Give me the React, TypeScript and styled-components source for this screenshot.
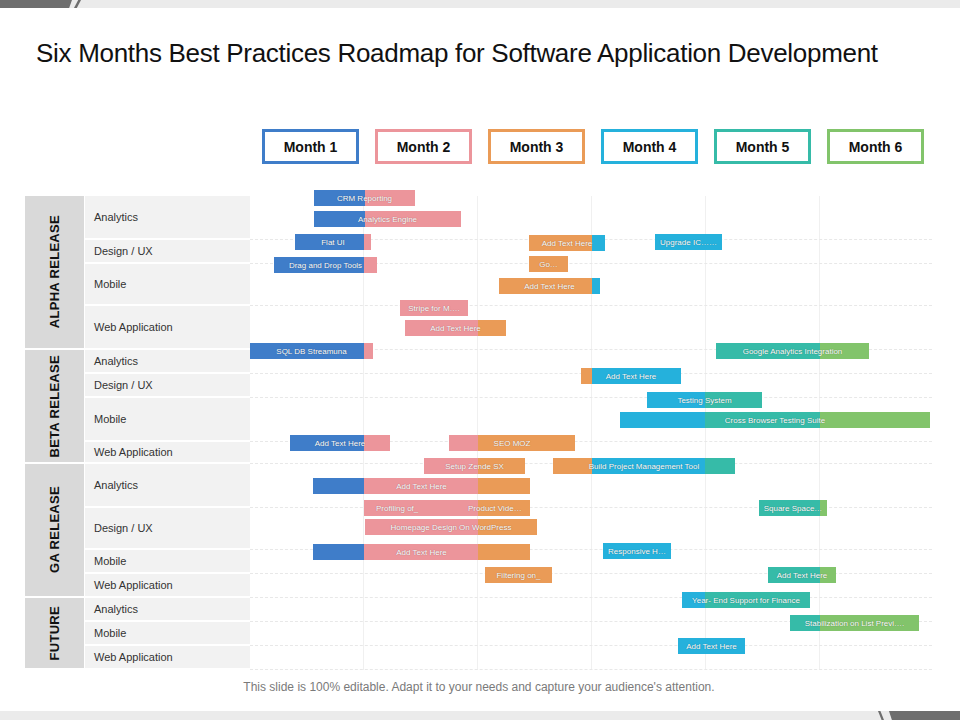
import React from "react";
import styled, { createGlobalStyle } from "styled-components";

const Global = createGlobalStyle`
  body { margin: 0; font-family: "Liberation Sans", Arial, sans-serif; background: #fff; }
`;

const C = {
  b: "#3f7dc9",
  p: "#ec959b",
  o: "#ea9b57",
  c: "#25b1dc",
  t: "#36bba8",
  g: "#82c46b",
};

const Page = styled.div`
  width: 960px;
  height: 720px;
  position: relative;
  overflow: hidden;
  display: flex;
  flex-direction: column;
`;

const TopBar = styled.div`
  height: 8px;
  background: #ebebeb;
  position: relative;
  &::before {
    content: "";
    position: absolute;
    left: 0;
    top: 0;
    height: 8px;
    width: 72px;
    background: #6e6e6e;
    clip-path: polygon(0 0, 100% 0, 96% 100%, 0 100%);
  }
  &::after {
    content: "";
    position: absolute;
    left: 74px;
    top: 0;
    height: 8px;
    width: 7px;
    background: #6e6e6e;
    clip-path: polygon(60% 0, 100% 0, 40% 100%, 0 100%);
  }
`;

const Title = styled.h1`
  margin: 30px 0 0 36px;
  font-weight: 400;
  font-size: 26px;
  line-height: 30px;
  color: #111;
  letter-spacing: -0.3px;
`;

const MonthRow = styled.div`
  display: flex;
  gap: 16px;
  margin: 61px 0 0 262px;
`;

const MonthBox = styled.div<{ $c: string }>`
  width: 97px;
  height: 35px;
  box-sizing: border-box;
  border: 3px solid ${(p) => p.$c};
  display: flex;
  align-items: center;
  justify-content: center;
  font-weight: 700;
  font-size: 14px;
  color: #111;
`;

const Section = styled.div`
  position: relative;
  margin: 32px 0 0 25px;
  width: 907px;
  display: flex;
  flex-direction: column;
  gap: 2px;
`;

const Group = styled.div`
  display: flex;
  gap: 1px;
`;

const GroupLabel = styled.div`
  width: 59px;
  background: #d9d9d9;
  display: flex;
  align-items: center;
  justify-content: center;
  font-weight: 700;
  font-size: 13px;
  color: #111;
  letter-spacing: 0.3px;
  span {
    writing-mode: vertical-rl;
    transform: rotate(180deg);
    white-space: nowrap;
  }
`;

const Rows = styled.div`
  flex: 1;
  display: flex;
  flex-direction: column;
  gap: 2px;
`;

const Row = styled.div<{ $h: number }>`
  display: flex;
  height: ${(p) => p.$h}px;
`;

const Label = styled.div`
  width: 165px;
  background: #f2f2f2;
  padding-left: 9px;
  box-sizing: border-box;
  display: flex;
  align-items: center;
  font-size: 11px;
  color: #333;
`;

const Track = styled.div`
  flex: 1;
  margin-bottom: -2px;
  border-bottom: 1px dashed #e8e8e8;
  background: repeating-linear-gradient(90deg, transparent 0 113px, #f0f0f0 113px 114px);
`;

const Bar = styled.div`
  position: absolute;
  height: 16px;
  display: flex;
  align-items: center;
  justify-content: center;
  color: #fff;
  font-size: 8px;
  white-space: nowrap;
  text-shadow: 0 0 1px rgba(0, 0, 0, 0.45);
  overflow: hidden;
`;

const BarText = styled.span<{ $x?: number }>`
  ${(p) => (p.$x !== undefined ? `position:absolute; left:${p.$x}px;` : "")}
`;

const Footer = styled.div`
  margin-top: 12px;
  text-align: center;
  font-size: 12px;
  color: #7a7a7a;
  padding-left: 0;
  width: 958px;
`;

const BottomBar = styled.div`
  position: absolute;
  left: 0;
  bottom: 0;
  width: 960px;
  height: 9px;
  background: #ebebeb;
  &::before {
    content: "";
    position: absolute;
    right: 0;
    top: 0;
    height: 9px;
    width: 74px;
    background: #6e6e6e;
    clip-path: polygon(4% 0, 100% 0, 100% 100%, 8% 100%);
  }
  &::after {
    content: "";
    position: absolute;
    right: 76px;
    top: 0;
    height: 9px;
    width: 6px;
    background: #6e6e6e;
    clip-path: polygon(0 0, 40% 0, 100% 100%, 60% 100%);
  }
`;

const months = [
  { n: "Month 1", c: C.b },
  { n: "Month 2", c: C.p },
  { n: "Month 3", c: C.o },
  { n: "Month 4", c: C.c },
  { n: "Month 5", c: C.t },
  { n: "Month 6", c: C.g },
];

const groups = [
  { name: "ALPHA RELEASE", rows: [["Analytics", 42], ["Design / UX", 22], ["Mobile", 40], ["Web Application", 42]] },
  { name: "BETA RELEASE", rows: [["Analytics", 22], ["Design / UX", 22], ["Mobile", 42], ["Web Application", 20]] },
  { name: "GA RELEASE", rows: [["Analytics", 42], ["Design / UX", 40], ["Mobile", 22], ["Web Application", 22]] },
  { name: "FUTURE", rows: [["Analytics", 22], ["Mobile", 22], ["Web Application", 22]] },
] as const;

// boundaries: month lines at 365,478,592,705,819
type B = { x0: number; x1: number; y: number; segs: [string, number][]; text: string; text2?: [string, number] };
const bars: B[] = [
  { x0: 314, x1: 415, y: 192, segs: [[C.b, 365], [C.p, 999]], text: "CRM Reporting" },
  { x0: 314, x1: 461, y: 213, segs: [[C.b, 365], [C.p, 999]], text: "Analytics Engine" },
  { x0: 295, x1: 371, y: 236, segs: [[C.b, 364], [C.p, 999]], text: "Flat UI" },
  { x0: 274, x1: 377, y: 259, segs: [[C.b, 364], [C.p, 999]], text: "Drag and Drop Tools" },
  { x0: 529, x1: 605, y: 237, segs: [[C.o, 592], [C.c, 999]], text: "Add Text Here" },
  { x0: 655, x1: 722, y: 236, segs: [[C.c, 999]], text: "Upgrade IC……" },
  { x0: 529, x1: 568, y: 258, segs: [[C.o, 999]], text: "Go…" },
  { x0: 499, x1: 600, y: 280, segs: [[C.o, 592], [C.c, 999]], text: "Add Text Here" },
  { x0: 400, x1: 468, y: 302, segs: [[C.p, 999]], text: "Stripe for M…." },
  { x0: 405, x1: 506, y: 322, segs: [[C.p, 478], [C.o, 999]], text: "Add Text Here" },
  { x0: 250, x1: 373, y: 345, segs: [[C.b, 364], [C.p, 999]], text: "SQL DB Streamuna" },
  { x0: 716, x1: 869, y: 345, segs: [[C.t, 820], [C.g, 999]], text: "Google Analytics Integration" },
  { x0: 581, x1: 681, y: 370, segs: [[C.o, 592], [C.c, 999]], text: "Add Text Here" },
  { x0: 647, x1: 762, y: 394, segs: [[C.c, 705], [C.t, 999]], text: "Testing System" },
  { x0: 620, x1: 930, y: 414, segs: [[C.c, 705], [C.t, 820], [C.g, 999]], text: "Cross Browser Testing Suite" },
  { x0: 290, x1: 390, y: 437, segs: [[C.b, 364], [C.p, 999]], text: "Add Text Here" },
  { x0: 449, x1: 575, y: 437, segs: [[C.p, 478], [C.o, 999]], text: "SEO MOZ" },
  { x0: 424, x1: 525, y: 460, segs: [[C.p, 478], [C.o, 999]], text: "Setup Zende SX" },
  { x0: 553, x1: 735, y: 460, segs: [[C.o, 592], [C.c, 705], [C.t, 999]], text: "Build Project Management  Tool" },
  { x0: 313, x1: 530, y: 480, segs: [[C.b, 364], [C.p, 478], [C.o, 999]], text: "Add Text Here" },
  { x0: 364, x1: 530, y: 502, segs: [[C.p, 478], [C.o, 999]], text: "", text2: ["Profiling of_", 12] },
  { x0: 365, x1: 537, y: 521, segs: [[C.p, 478], [C.o, 999]], text: "Homepage Design On WordPress" },
  { x0: 759, x1: 827, y: 502, segs: [[C.t, 820], [C.g, 999]], text: "Square Space…" },
  { x0: 313, x1: 530, y: 546, segs: [[C.b, 364], [C.p, 478], [C.o, 999]], text: "Add Text Here" },
  { x0: 603, x1: 671, y: 545, segs: [[C.c, 999]], text: "Responsive H…" },
  { x0: 485, x1: 552, y: 569, segs: [[C.o, 999]], text: "Filtering on_" },
  { x0: 768, x1: 836, y: 569, segs: [[C.t, 820], [C.g, 999]], text: "Add Text Here" },
  { x0: 682, x1: 810, y: 594, segs: [[C.c, 705], [C.t, 999]], text: "Year- End Support for Finance" },
  { x0: 790, x1: 919, y: 617, segs: [[C.t, 820], [C.g, 999]], text: "Stabilization  on List Previ…." },
  { x0: 678, x1: 745, y: 640, segs: [[C.c, 999]], text: "Add Text Here" },
];

const SX = 25;
const SY = 198;

function bg(b: B) {
  let prev = 0;
  const w = b.x1 - b.x0;
  const stops = b.segs.map(([c, end]) => {
    const e = Math.min(end, b.x1) - b.x0;
    const s = `${c} ${prev}px ${e}px`;
    prev = e;
    return s;
  });
  return `linear-gradient(90deg, ${stops.join(", ")})`;
}

export default function App() {
  return (
    <Page>
      <Global />
      <TopBar />
      <Title>Six Months Best Practices Roadmap for Software Application Development</Title>
      <MonthRow>
        {months.map((m) => (
          <MonthBox key={m.n} $c={m.c}>{m.n}</MonthBox>
        ))}
      </MonthRow>
      <Section>
        {groups.map((g) => (
          <Group key={g.name}>
            <GroupLabel><span>{g.name}</span></GroupLabel>
            <Rows>
              {g.rows.map(([n, h], i) => (
                <Row key={i} $h={h}>
                  <Label>{n}</Label>
                  <Track />
                </Row>
              ))}
            </Rows>
          </Group>
        ))}
        {bars.map((b, i) => (
          <Bar
            key={i}
            style={{ left: b.x0 - SX, top: b.y - SY, width: b.x1 - b.x0, background: bg(b) }}
          >
            {b.text2 ? (
              <>
                <BarText $x={b.text2[1]}>{b.text2[0]}</BarText>
                <BarText $x={104}>Product Vide…</BarText>
              </>
            ) : (
              <BarText>{b.text}</BarText>
            )}
          </Bar>
        ))}
      </Section>
      <Footer>This slide is 100% editable. Adapt it to your needs and capture your audience's attention.</Footer>
      <BottomBar />
    </Page>
  );
}
